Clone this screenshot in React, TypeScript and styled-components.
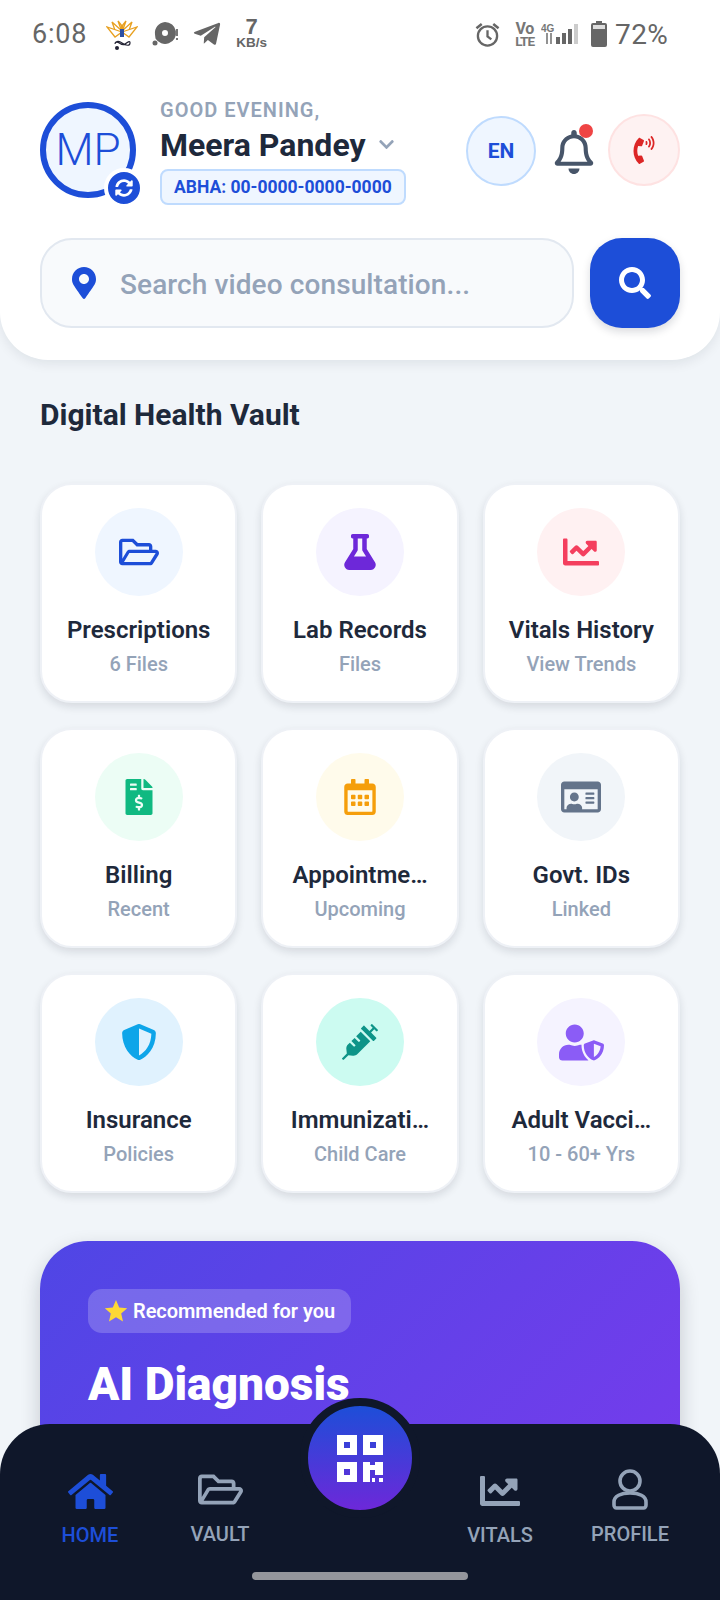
import React from "react";
import styled, { createGlobalStyle } from "styled-components";
import {
  FaRegCalendarAlt, FaChartLine, FaChevronDown, FaFileInvoiceDollar, FaFlask, FaHome, FaMapMarkerAlt,
  FaPhoneVolume, FaRegBell, FaRegFolderOpen, FaSearch, FaShieldAlt, FaSyncAlt, FaSyringe,
  FaTelegramPlane, FaUserShield, FaRegIdCard,
} from "react-icons/fa";

const Global = createGlobalStyle`
  html, body { margin: 0; padding: 0; background: #f1f5f9; }
  * { box-sizing: border-box; }
  body { font-family: Roboto, "Liberation Sans", sans-serif; }
`;

const Screen = styled.div`
  position: relative; width: 720px; height: 1600px; overflow: hidden; background: #f1f5f9;
`;
const Header = styled.header`
  background: #fff; border-radius: 0 0 48px 48px; padding-bottom: 32px;
  box-shadow: 0 4px 12px rgba(15, 23, 42, 0.08);
`;
const StatusBar = styled.div`
  height: 68px; display: flex; align-items: center; padding: 0 52px 0 32px; color: #666;
`;
const Time = styled.span`font-size: 27px; letter-spacing: .8px; margin-right: 19px;`;
const StatusIcons = styled.div`display: flex; align-items: center; gap: 14px;`;
const Speed = styled.div`
  display: flex; flex-direction: column; align-items: center; font-family: "Liberation Sans", sans-serif; font-weight: 700;
  margin-top: -3px;
  & b { font-size: 22px; line-height: 19px; }
  & small { font-size: 13.500px; line-height: 13px; }
`;
const Spacer = styled.div`flex: 1;`;
const VoLte = styled.div`
  display: flex; flex-direction: column; align-items: center; width: 19px; margin: 0 7px 0 15px;
  font-family: Roboto, sans-serif; font-weight: 700; color: #777;
  & span { font-size: 16px; line-height: 13px; letter-spacing: -.5px; }
  & span + span { font-size: 13.500px; line-height: 12px; letter-spacing: -1px; }
`;
const Battery = styled.span`font-size: 28px; letter-spacing: .3px; margin-left: 8px;`;
const RightIcons = styled.div`display: flex; align-items: center;`;
const SignalSlot = styled.div`margin-right: 12px; display: flex;`;

const ProfileRow = styled.div`
  display: flex; align-items: center; padding: 0 40px; margin-top: 34px; height: 96px;
`;
const Avatar = styled.div`
  position: relative; width: 96px; height: 96px; border-radius: 50%; border: 6px solid #1d4ed8; background: #eff6ff;
  display: flex; align-items: center; justify-content: center; color: #1d4ed8; font-size: 44px; font-weight: 300;
  flex: none;
`;
const AvatarBadge = styled.div`
  position: absolute; right: -14px; bottom: -16px; width: 40px; height: 40px; border-radius: 50%;
  background: #1d4ed8; border: 4px solid #fff; display: flex; align-items: center; justify-content: center; color: #fff;
`;
const Identity = styled.div`
  margin-left: 24px; display: flex; flex-direction: column; align-items: flex-start; margin-top: 2px;
`;
const Greeting = styled.div`
  font-size: 20px; font-weight: 600; letter-spacing: 1px; color: #94a3b8; line-height: 24px;
`;
const NameRow = styled.div`display: flex; align-items: center; gap: 12px; margin-top: 3px; color: #94a3b8;`;
const Name = styled.div`font-size: 32px; font-weight: 700; color: #1e293b; line-height: 40px;`;
const Abha = styled.div`
  margin-top: 4px; height: 36px; padding: 0 12px; display: flex; align-items: center; border-radius: 8px;
  border: 2px solid #bfdbfe; background: #eff6ff; color: #1d4ed8; font-size: 17.500px; font-weight: 700;
`;
const Actions = styled.div`margin-left: auto; display: flex; align-items: center;`;
const LangButton = styled.div`
  width: 70px; height: 70px; margin-top: 1px; border-radius: 50%; border: 2px solid #bfdbfe; background: #eff6ff; color: #1d4ed8;
  display: flex; align-items: center; justify-content: center; font-size: 21px; font-weight: 700;
`;
const BellButton = styled.div`
  position: relative; width: 72px; display: flex; justify-content: center; color: #475569; padding: 3px 0 0 3px;
  & svg { display: block; }
`;
const BellDot = styled.span`
  position: absolute; top: -3px; left: 43px; width: 14px; height: 14px; border-radius: 50%; background: #ef4444;
`;
const CallButton = styled.div`
  width: 72px; height: 72px; border-radius: 50%; border: 2px solid #fee2e2; background: #fef2f2; color: #dc2626;
  display: flex; align-items: center; justify-content: center;
`;
const SearchRow = styled.div`display: flex; gap: 16px; padding: 0 40px; margin-top: 40px;`;
const SearchBox = styled.div`
  flex: 1; height: 90px; border-radius: 32px; border: 2px solid #e2e8f0; background: #f8fafc;
  display: flex; align-items: center; padding: 0 26px; gap: 20px; color: #1d4ed8;
`;
const Placeholder = styled.span`font-size: 28px; font-weight: 500; letter-spacing: .1px; color: #94a3b8; position: relative; top: 1px;`;
const SearchButton = styled.div`
  width: 90px; height: 90px; border-radius: 32px; background: #1d4ed8; color: #fff;
  display: flex; align-items: center; justify-content: center; box-shadow: 0 4px 8px rgba(15, 23, 42, .15);
`;
const SectionTitle = styled.h2`
  margin: 36px 40px 0; font-size: 30px; line-height: 38px; font-weight: 700; color: #1e293b;
`;
const Grid = styled.div`
  display: grid; grid-template-columns: repeat(3, 1fr); gap: 25px 24px; padding: 0 40px; margin-top: 49px;
`;
const Card = styled.div`
  height: 220px; border-radius: 32px; background: #fff; border: 2px solid #eef1f6; padding: 23px 24px 0;
  display: flex; flex-direction: column; align-items: center; box-shadow: 0 4px 8px rgba(15, 23, 42, .12);
  min-width: 0;
`;
const IconCircle = styled.div<{ $bg: string; $fg: string }>`
  width: 88px; height: 88px; border-radius: 50%; background: ${(p) => p.$bg}; color: ${(p) => p.$fg};
  display: flex; align-items: center; justify-content: center; flex: none;
`;
const CardTitle = styled.div`
  margin-top: 19px; text-align: center; font-size: 24px; line-height: 30px; font-weight: 600; color: #1e293b;
  white-space: nowrap;
`;
const CardSub = styled.div`
  margin-top: 6px; font-size: 20px; line-height: 26px; font-weight: 500; color: #94a3b8;
`;
const Banner = styled.section`
  margin: 48px 40px 0; height: 400px; border-radius: 48px; padding: 48px;
  background: linear-gradient(135deg, #4f46e5, #7c3aed); box-shadow: 0 8px 20px rgba(15, 23, 42, .2);
`;
const Pill = styled.div`
  display: inline-flex; align-items: center; gap: 5px; height: 44px; padding: 0 16px 0 16px; border-radius: 14px;
  background: rgba(255,255,255,.2); color: #fff; font-size: 20px; font-weight: 600; letter-spacing: -.05px;
`;
const BannerTitle = styled.div`
  margin-top: 23px; font-size: 46px; line-height: 56px; font-weight: 900; color: #fff;
`;
const Nav = styled.nav`
  position: absolute; left: 0; right: 0; bottom: 0; height: 176px; background: #0f172a; border-radius: 50px 50px 0 0;
  display: grid; grid-template-columns: 130px 130px 150px 130px 130px; padding: 0 25px;
`;
const NavItem = styled.div<{ $active?: boolean; $up?: boolean }>`
  display: flex; flex-direction: column; align-items: center; padding-top: ${(p) => (p.$up ? 42 : 44)}px;
  color: ${(p) => (p.$active ? "#1d4ed8" : "#94a3b8")};
`;
const NavIcon = styled.div`height: 46px; display: flex; align-items: center; justify-content: center;`;
const NavLabel = styled.span<{ $up?: boolean }>`
  margin-top: ${(p) => (p.$up ? 9 : 8)}px; font-size: 20px; line-height: 26px; font-weight: 500;
`;
const QrButton = styled.div`
  position: absolute; left: 300px; top: -26px; width: 120px; height: 120px; border-radius: 50%; border: 8px solid #0f172a;
  background: linear-gradient(180deg, #1d4ed8, #6d28d9); display: flex; align-items: center; justify-content: center;
`;
const HomeBar = styled.div`
  position: absolute; left: 252px; bottom: 20px; width: 216px; height: 8px; border-radius: 4px; background: #94969c;
`;

const cards = [
  { t: "Prescriptions", s: "6 Files", bg: "#eff6ff", fg: "#1d4ed8", i: <FaRegFolderOpen size={40} /> },
  { t: "Lab Records", s: "Files", bg: "#f5f3ff", fg: "#6d28d9", i: <FaFlask size={36} /> },
  { t: "Vitals History", s: "View Trends", bg: "#fff1f2", fg: "#f43f5e", i: <FaChartLine size={36} /> },
  { t: "Billing", s: "Recent", bg: "#ecfdf5", fg: "#10b981", i: <FaFileInvoiceDollar size={36} /> },
  { t: "Appointme…", s: "Upcoming", bg: "#fffbeb", fg: "#f59e0b", i: <FaRegCalendarAlt size={36} /> },
  { t: "Govt. IDs", s: "Linked", bg: "#f1f5f9", fg: "#64748b", i: <FaRegIdCard size={40} /> },
  { t: "Insurance", s: "Policies", bg: "#e0f2fe", fg: "#0ea5e9", i: <FaShieldAlt size={36} /> },
  { t: "Immunizati…", s: "Child Care", bg: "#ccfbf1", fg: "#0d9488", i: <FaSyringe size={36} /> },
  { t: "Adult Vacci…", s: "10 - 60+ Yrs", bg: "#f5f3ff", fg: "#8b5cf6", i: <FaUserShield size={45} /> },
];

const Logo = () => (
  <svg width="32" height="32" viewBox="0 0 32 32">
    <g fill="#fff" stroke="#e8a020" strokeWidth="1.300">
      <path d="M16 13 L6 4 L10 15 Z" /><path d="M16 13 L26 4 L22 15 Z" /><path d="M16 14 L1 9 L9 19 Z" /><path d="M16 14 L31 9 L23 19 Z" /><path d="M16 14 L12 3 L16 8 L20 3 Z" />
    </g>
    <rect x="14" y="11" width="4" height="8" fill="#2c4fa3" /><rect x="14.500" y="7" width="3" height="4" fill="#e8a020" />
    <path d="M9 25 C12 21 15 29 19 26 C23 23 24 23 24 25 C24 28 20 28 16 25 C12 22 9 24 9 26" fill="none" stroke="#223" strokeWidth="1.200" />
    <circle cx="11" cy="30" r="2" fill="#223" />
  </svg>
);
const DiscIcon = () => (
  <svg width="26" height="28" viewBox="0 0 26 28">
    <path fillRule="evenodd" fill="#666" d="M13 2a11 11 0 1 1 -9.500 16.500l-.5-4A11 11 0 0 1 13 2zm0 8a3 3 0 1 0 0 6 3 3 0 0 0 0-6z" />
    <circle cx="3" cy="23" r="2.500" fill="#666" />
    <rect x="24" y="9" width="2" height="7" fill="#777" /><rect x="24" y="18" width="2" height="2" fill="#777" />
  </svg>
);
const AlarmIcon = () => (
  <svg width="25" height="27" viewBox="0 0 26 27" fill="none" stroke="#666" strokeWidth="2.400">
    <circle cx="13" cy="15" r="10" /><path d="M13 9v6.500l4 3" /><path d="M1.500 7 7 2.500M24.500 7 19 2.500" strokeWidth="2.600" />
  </svg>
);
const SignalIcon = () => (
  <svg width="38" height="24" viewBox="0 0 38 24">
    <text x="0" y="10" fontSize="10" fontFamily="Liberation Sans" fontWeight="700" fill="#777">4G</text>
    <path d="M6 11v11M10 11v11" stroke="#777" strokeWidth="1.600" />
    <rect x="15" y="15" width="4" height="7" fill="#666" /><rect x="21" y="11" width="4" height="11" fill="#666" /><rect x="27" y="7" width="4" height="15" fill="#666" /><rect x="33" y="2" width="4" height="20" fill="#ccc" />
  </svg>
);
const BatteryIcon = () => (
  <svg width="16" height="26" viewBox="0 0 16 26">
    <path fill="#666" d="M5 0h6v2h3a2 2 0 0 1 2 2v20a2 2 0 0 1-2 2H2a2 2 0 0 1-2-2V4a2 2 0 0 1 2-2h3z" />
    <rect x="2" y="4" width="12" height="4" fill="#ddd" />
  </svg>
);
const Star = () => (
  <svg width="24" height="24" viewBox="0 0 24 24"><path fill="#fdd835" d="M12 1l3.200 7.500 8 .7-6 5.300 1.800 8L12 18.200 5 22.500l1.800-8-6-5.300 8-.7z" /></svg>
);
const ProfileIcon = () => (
  <svg width="36" height="41" viewBox="0 0 36 41" fill="none" stroke="currentColor" strokeWidth="3.600">
    <circle cx="18" cy="12" r="10" />
    <path d="M2 36v-3c0-6 7-9 16-9s16 3 16 9v3c0 1.500-1 3-2.500 3h-27C3 39 2 37.500 2 36z" />
  </svg>
);
const QrIcon = () => (
  <svg width="46" height="47" viewBox="0 0 46 47" fill="#fff">
    <path fillRule="evenodd" d="M0 0h20v20H0zM7 7v6h6V7z" />
    <path fillRule="evenodd" d="M26 0h20v20H26zM33 7v6h6V7z" />
    <path fillRule="evenodd" d="M0 27h20v20H0zM7 34v6h6v-6z" />
    <path d="M26 27h7v3h5v-3h8v13h-8v-5h-5v12h-7z" />
    <rect x="35" y="43" width="3" height="4" /><rect x="42" y="43" width="4" height="4" />
  </svg>
);

export default function App() {
  return (
    <Screen>
      <Global />
      <Header>
        <StatusBar>
          <Time>6:08</Time>
          <StatusIcons>
            <Logo />
            <DiscIcon />
            <FaTelegramPlane size={30} color="#666" />
            <Speed><b>7</b><small>KB/s</small></Speed>
          </StatusIcons>
          <Spacer />
          <RightIcons>
            <AlarmIcon />
            <VoLte><span>Vo</span><span>LTE</span></VoLte>
            <SignalSlot><SignalIcon /></SignalSlot>
            <BatteryIcon />
            <Battery>72%</Battery>
          </RightIcons>
        </StatusBar>
        <ProfileRow>
          <Avatar>
            MP
            <AvatarBadge><FaSyncAlt size={18} /></AvatarBadge>
          </Avatar>
          <Identity>
            <Greeting>GOOD EVENING,</Greeting>
            <NameRow><Name>Meera Pandey</Name><FaChevronDown size={17} /></NameRow>
            <Abha>ABHA: 00-0000-0000-0000</Abha>
          </Identity>
          <Actions>
            <LangButton>EN</LangButton>
            <BellButton><FaRegBell size={44} /><BellDot /></BellButton>
            <CallButton><FaPhoneVolume size={28} /></CallButton>
          </Actions>
        </ProfileRow>
        <SearchRow>
          <SearchBox>
            <FaMapMarkerAlt size={32} />
            <Placeholder>Search video consultation...</Placeholder>
          </SearchBox>
          <SearchButton><FaSearch size={32} /></SearchButton>
        </SearchRow>
      </Header>
      <SectionTitle>Digital Health Vault</SectionTitle>
      <Grid>
        {cards.map((c) => (
          <Card key={c.t}>
            <IconCircle $bg={c.bg} $fg={c.fg}>{c.i}</IconCircle>
            <CardTitle>{c.t}</CardTitle>
            <CardSub>{c.s}</CardSub>
          </Card>
        ))}
      </Grid>
      <Banner>
        <Pill><Star />Recommended for you</Pill>
        <BannerTitle>AI Diagnosis</BannerTitle>
      </Banner>
      <Nav>
        <NavItem $active><NavIcon><FaHome size={45} /></NavIcon><NavLabel>HOME</NavLabel></NavItem>
        <NavItem $up><NavIcon><FaRegFolderOpen size={45} /></NavIcon><NavLabel $up>VAULT</NavLabel></NavItem>
        <div />
        <NavItem><NavIcon><FaChartLine size={40} /></NavIcon><NavLabel>VITALS</NavLabel></NavItem>
        <NavItem $up><NavIcon><ProfileIcon /></NavIcon><NavLabel $up>PROFILE</NavLabel></NavItem>
        <QrButton><QrIcon /></QrButton>
        <HomeBar />
      </Nav>
    </Screen>
  );
}
